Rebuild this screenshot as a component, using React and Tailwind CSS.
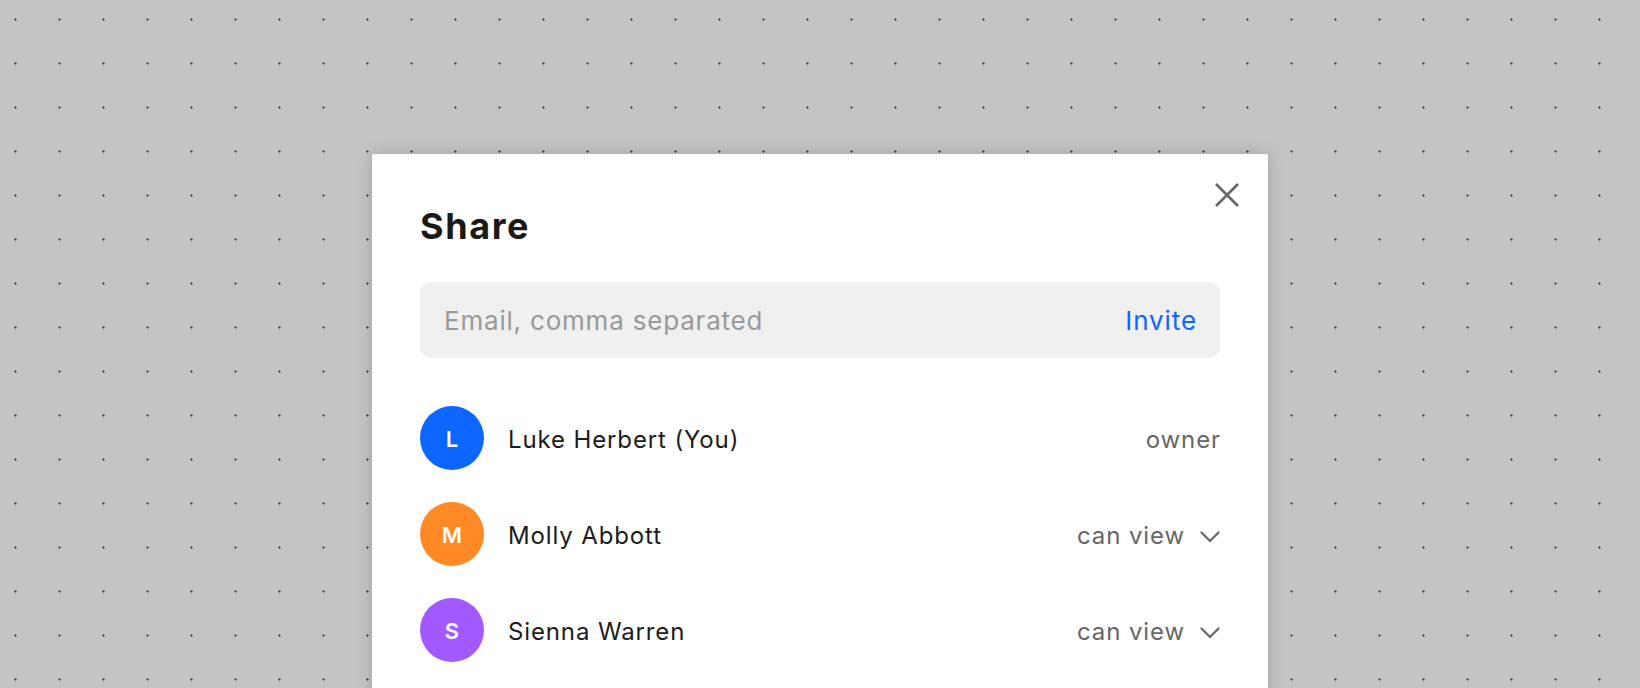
import React from "react";

const people = [
  { initial: "L", name: "Luke Herbert (You)", role: "owner", color: "bg-[#0d66ff]", chevron: false },
  { initial: "M", name: "Molly Abbott", role: "can view", color: "bg-[#ff8a25]", chevron: true },
  { initial: "S", name: "Sienna Warren", role: "can view", color: "bg-[#a259ff]", chevron: true },
];

function Chevron() {
  return (
    <svg width="20" height="12" viewBox="0 0 20 12" fill="none" className="block">
      <polyline points="1.5,1.5 10,10 18.5,1.5" stroke="#666" strokeWidth="2.2" strokeLinecap="round" strokeLinejoin="round" />
    </svg>
  );
}

function CloseIcon() {
  return (
    <svg width="24" height="24" viewBox="0 0 24 24" fill="none" className="block">
      <path d="M1 1L23 23M23 1L1 23" stroke="#666" strokeWidth="2.6" />
    </svg>
  );
}

export default function App() {
  return (
    <div
      className="h-[688px] w-full overflow-hidden bg-[#c4c4c4] bg-[radial-gradient(circle_at_15.5px_19.5px,#444_0.9px,transparent_1.3px)] bg-[size:44px_44px] pt-[154px]"
      style={{ fontFamily: "Inter, 'Noto Sans', sans-serif" }}
    >
      <div className="relative mx-auto h-[700px] w-[896px] rounded-[2px] bg-white px-12 pt-[50px] shadow-[0_0_16px_rgba(0,0,0,0.18)]">
        <button className="absolute right-[29px] top-[29px]" aria-label="Close">
          <CloseIcon />
        </button>
        <h1 className="text-[36px] font-bold leading-[44px] tracking-[1.6px] text-[#1a1a1a]">Share</h1>
        <div className="mt-[34px] flex h-[76px] items-center rounded-xl bg-[#f0f0f0] pl-6 pr-6">
          <input
            className="min-w-0 flex-1 bg-transparent text-[26px] tracking-[0.8px] text-[#1a1a1a] outline-none placeholder:text-[#999]"
            style={{ fontFamily: "Inter, 'Noto Sans', sans-serif" }}
            placeholder="Email, comma separated"
          />
          <button className="mr-[-1px] text-[26px] tracking-[0.9px] text-[#0d66ff]">Invite</button>
        </div>
        <div className="mt-12 flex flex-col gap-8">
          {people.map((p) => (
            <div key={p.name} className="flex h-16 items-center">
              <div className={`flex h-16 w-16 items-center justify-center rounded-full pt-[2px] ${p.color} text-[22px] font-semibold text-white`}>
                {p.initial}
              </div>
              <div className="ml-6 flex-1 pt-1 text-[24px] tracking-[0.87px] text-[#1c1c1c]">{p.name}</div>
              <div className="flex items-center gap-4 text-[24px] tracking-[0.9px] text-[#666]">
                <span className="mr-[-1px] pt-1">{p.role}</span>
                {p.chevron && (
                  <span className="pt-[6px]">
                    <Chevron />
                  </span>
                )}
              </div>
            </div>
          ))}
        </div>
      </div>
    </div>
  );
}
